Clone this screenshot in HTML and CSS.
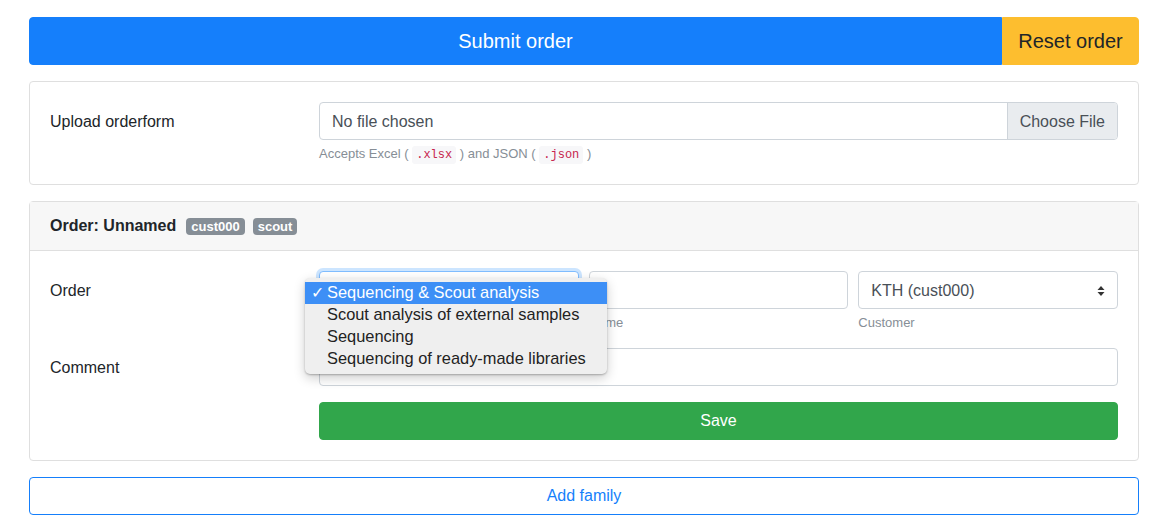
FILE: index.html
```html
<!DOCTYPE html>
<html>
<head>
<meta charset="utf-8">
<link rel="stylesheet" href="styles.css">
</head>
<body>
<div class="container">
  <div class="btn-group">
    <button class="btn btn-lg btn-primary grow">Submit order</button>
    <button class="btn btn-lg btn-warning">Reset order</button>
  </div>

  <div class="card">
    <div class="card-body">
      <div class="form-row-h">
        <label class="col-label">Upload orderform</label>
        <div class="col-field">
          <div class="file-input">
            <span class="file-name">No file chosen</span>
            <span class="file-btn">Choose File</span>
          </div>
          <small class="help">Accepts Excel ( <code>.xlsx</code> ) and JSON ( <code>.json</code> )</small>
        </div>
      </div>
    </div>
  </div>

  <div class="card">
    <div class="card-header">
      <strong>Order: Unnamed</strong>
      <span class="badge">cust000</span>
      <span class="badge">scout</span>
    </div>
    <div class="card-body">
      <div class="form-row-h">
        <label class="col-label">Order</label>
        <div class="col-field three">
          <div class="sub">
            <div class="control select focused"></div>
            <div class="menu">
              <div class="opt active"><span class="check">✓</span>Sequencing &amp; Scout analysis</div>
              <div class="opt">Scout analysis of external samples</div>
              <div class="opt">Sequencing</div>
              <div class="opt">Sequencing of ready-made libraries</div>
            </div>
          </div>
          <div class="sub">
            <div class="control"></div>
            <small class="help">Name</small>
          </div>
          <div class="sub">
            <div class="control select">KTH (cust000)
              <svg class="arrows" width="8" height="12" viewBox="0 0 8 12"><path d="M4 1 L7.5 5 H0.5 Z M4 11 L0.5 7 H7.5 Z" fill="#333"/></svg>
            </div>
            <small class="help">Customer</small>
          </div>
        </div>
      </div>
      <div class="form-row-h comment-row">
        <label class="col-label">Comment</label>
        <div class="col-field">
          <div class="control"></div>
        </div>
      </div>
      <div class="form-row-h save-row">
        <div class="col-label"></div>
        <div class="col-field">
          <button class="btn btn-success block">Save</button>
        </div>
      </div>
    </div>
  </div>

  <button class="btn btn-outline-primary block add-family">Add family</button>
</div>
</body>
</html>
```

FILE: styles.css
```css
* { box-sizing: border-box; }
body {
  margin: 0;
  font-family: "Liberation Sans", Arial, sans-serif;
  font-size: 16px;
  line-height: 1.5;
  color: #212529;
  background: #fff;
}
.container {
  width: 1110px;
  margin-left: 29px;
  padding-top: 17px;
}
.btn {
  display: inline-block;
  font-family: inherit;
  font-size: 16px;
  line-height: 1.5;
  padding: 6px 12px;
  border: 1px solid transparent;
  border-radius: 4px;
  text-align: center;
  white-space: nowrap;
  cursor: pointer;
}
.btn-lg {
  font-size: 20px;
  padding: 8px 16px;
  height: 48px;
}
.btn-group { display: flex; }
.btn-group .btn:first-child { border-top-right-radius: 0; border-bottom-right-radius: 0; }
.btn-group .btn:last-child { border-top-left-radius: 0; border-bottom-left-radius: 0; }
.grow { flex: 1; }
.btn-primary { background: #157ffb; border-color: #157ffb; color: #fff; }
.btn-warning { background: #fdbe2f; border-color: #fdbe2f; color: #212529; width: 137px; padding-left: 8px; padding-right: 8px; }
.btn-success { background: #31a64b; border-color: #31a64b; color: #fff; }
.btn-outline-primary { background: #fff; border-color: #157ffb; color: #157ffb; }
.block { display: block; width: 100%; height: 38px; }
.add-family { margin-top: 16px; }

.card {
  margin-top: 16px;
  border: 1px solid #dfdfdf;
  border-radius: 4px;
  background: #fff;
}
.card-header {
  background: #f7f7f7;
  border-bottom: 1px solid #dfdfdf;
  padding: 12px 20px;
  height: 49px;
  display: flex;
  align-items: center;
  gap: 8px;
}
.card-header strong { font-weight: 700; margin-right: 2px; }
.badge {
  background: #868e96;
  color: #fff;
  font-size: 13px;
  font-weight: 700;
  line-height: 13px;
  padding: 2px 5px;
  border-radius: 4px;
}
.card-body { padding: 20px; }
.form-row-h { display: flex; }
.col-label {
  width: 269px;
  flex: none;
  padding-top: 8px;
}
.col-field { flex: 1; }
.col-field.three { display: flex; gap: 10px; }
.sub { flex: 1; position: relative; }
.file-input {
  display: flex;
  height: 38px;
  border: 1px solid #ced4da;
  border-radius: 4px;
  overflow: hidden;
}
.file-name { flex: 1; padding: 7px 12px 5px; color: #495057; }
.file-btn {
  background: #e9ecef;
  border-left: 1px solid #ced4da;
  padding: 7px 12px 5px;
  color: #495057;
}
.help {
  display: block;
  font-size: 13px;
  color: #868e96;
  margin-top: 4px;
  line-height: 1.5;
}
code {
  font-family: "Liberation Mono", monospace;
  font-size: 12px;
  color: #c7254e;
  background: #f7f7f9;
  padding: 2px 4px;
  border-radius: 3px;
}
.control {
  height: 38px;
  border: 1px solid #ced4da;
  border-radius: 4px;
  padding: 7px 12px 5px;
  color: #495057;
  background: #fff;
}
.control.select { position: relative; }
.control.focused {
  border-color: #80bdff;
  box-shadow: 0 0 0 3px rgba(0, 123, 255, .2);
}
.arrows { position: absolute; right: 12px; top: 13px; }
.comment-row { margin-top: 15px; }
.save-row { margin-top: 16px; }
.menu {
  position: absolute;
  left: -14px;
  top: 7px;
  width: 302px;
  background: #efefef;
  border-radius: 5px;
  box-shadow: 0 1px 2px rgba(0,0,0,.25), 0 4px 12px rgba(0,0,0,.2);
  padding: 4px 0;
  z-index: 10;
  font-size: 16.4px;
  color: #222;
}
.opt {
  height: 22px;
  line-height: 20px;
  padding-left: 22px;
  position: relative;
  white-space: nowrap;
}
.opt.active { background: #3d8ff6; color: #fff; }
.check { position: absolute; left: 6px; }
```
